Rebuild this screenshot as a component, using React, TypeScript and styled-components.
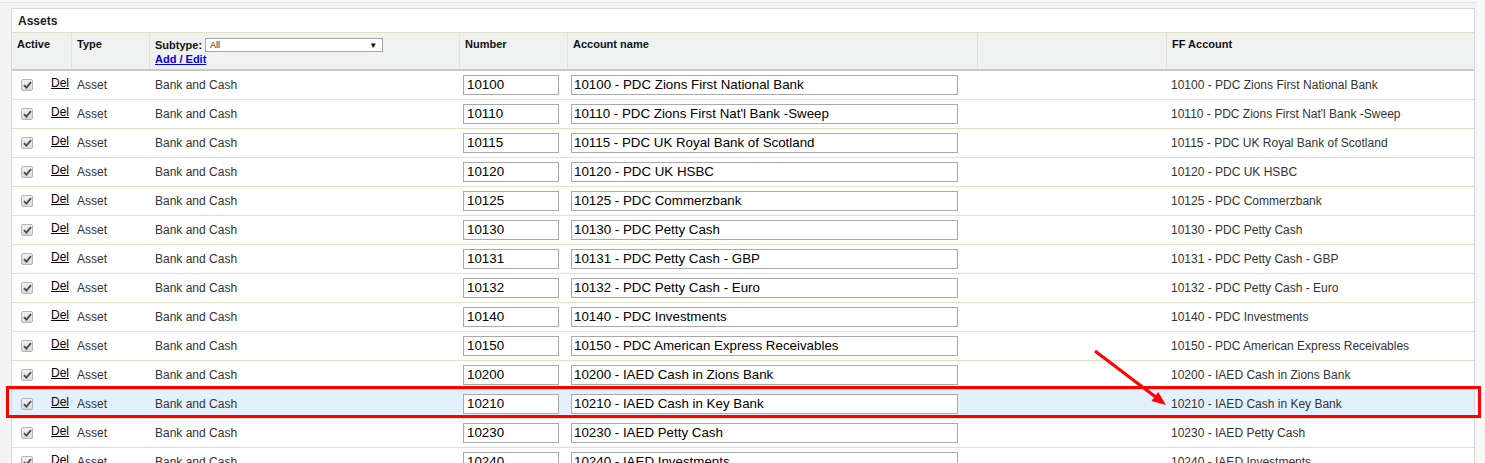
import React from "react";
import styled, { createGlobalStyle, css } from "styled-components";

const GlobalStyle = createGlobalStyle`
  html, body {
    margin: 0;
    padding: 0;
    overflow: hidden;
    background: #f8f8f8;
    font-family: "Liberation Sans", Arial, sans-serif;
  }
`;

const Page = styled.div`
  position: relative;
  width: 1477px;
  margin-top: 2px;
  border-top: 1px solid #e6e6e6;
  background: #f4f4f4;
  padding: 5px 0 0 11px;
  box-sizing: border-box;
  height: 461px;
`;

const Panel = styled.div`
  width: 1464px;
  box-sizing: border-box;
  border: 1px solid #d9d9d9;
  border-bottom: none;
  background: #fff;
`;

const Title = styled.div`
  height: 23px;
  display: flex;
  align-items: center;
  padding-left: 6px;
  font-size: 12px;
  font-weight: bold;
  color: #222;
  border-bottom: 1px solid #e2ddc0;
`;

const COLS = "60px 78px 310px 108px 410px 189px 1fr";

const HeaderRow = styled.div`
  display: grid;
  grid-template-columns: ${COLS};
  height: 36px;
  background: #f0f1f1;
  border-bottom: 2px solid #c9c9c9;
`;

const HeaderCell = styled.div<{ $last?: boolean }>`
  padding: 5px 0 0 5px;
  font-size: 11px;
  font-weight: bold;
  color: #111;
  line-height: 13px;
  border-right: ${(p) => (p.$last ? "none" : "1px solid #e1e1e1")};
`;

const SubtypeLine = styled.div`
  display: flex;
  align-items: center;
  gap: 3px;
`;

const SelectBox = styled.div`
  width: 178px;
  height: 14px;
  box-sizing: border-box;
  border: 1px solid #a6a6a6;
  background: #fff;
  display: flex;
  align-items: center;
  justify-content: space-between;
  padding: 0 5px 0 4px;
  font-size: 9px;
  font-weight: normal;
  color: #222;
`;

const Arrow = styled.span`
  font-size: 8px;
  color: #000;
`;

const HeaderLink = styled.a`
  display: block;
  margin-top: 1px;
  color: #0000ee;
  text-decoration: underline;
  font-size: 11px;
  font-weight: bold;
  cursor: pointer;
`;

const Row = styled.div<{ $highlight?: boolean }>`
  position: relative;
  display: grid;
  grid-template-columns: ${COLS};
  height: 29px;
  box-sizing: border-box;
  border-bottom: 1px solid #e4e0c6;
  background: ${(p) => (p.$highlight ? "#e2f1fd" : "#fff")};
  font-size: 12px;
  color: #333;
  ${(p) =>
    p.$highlight &&
    css`
      &::after {
        content: "";
        position: absolute;
        top: -4px;
        bottom: 0;
        left: -6px;
        right: -7px;
        border: 3px solid #ff0000;
        pointer-events: none;
        z-index: 2;
      }
    `}
`;

const Cell = styled.div<{ $pad?: number }>`
  display: flex;
  align-items: center;
  padding-left: ${(p) => (p.$pad ?? 5)}px;
  white-space: nowrap;
`;

const ActiveCell = styled.div`
  display: flex;
  align-items: center;
  padding-left: 9px;
  gap: 18px;
`;

const CheckBox = styled.span`
  width: 12px;
  height: 12px;
  box-sizing: border-box;
  border: 1px solid #b4b4b4;
  border-radius: 2px;
  background: linear-gradient(#f2f2f2, #d9d9d9);
  display: flex;
  align-items: center;
  justify-content: center;
`;

const DelLink = styled.a`
  align-self: flex-start;
  margin-top: 5px;
  font-size: 12px;
  color: #000;
  text-decoration: underline;
  cursor: pointer;
`;

const TextInput = styled.input<{ $w: number; $padX: number }>`
  width: ${(p) => p.$w}px;
  height: 20px;
  box-sizing: border-box;
  border: 1px solid #a9a9a9;
  padding: 0 ${(p) => p.$padX}px;
  margin: 0 0 1px;
  font-family: "Liberation Sans", Arial, sans-serif;
  font-size: 13.33px;
  color: #000;
  background: #fff;
  outline: none;
`;

const Annotation = styled.svg`
  position: absolute;
  left: 1088px;
  top: 341px;
  z-index: 3;
`;

const rows: [string, string][] = [
  ["10100", "PDC Zions First National Bank"],
  ["10110", "PDC Zions First Nat'l Bank -Sweep"],
  ["10115", "PDC UK Royal Bank of Scotland"],
  ["10120", "PDC UK HSBC"],
  ["10125", "PDC Commerzbank"],
  ["10130", "PDC Petty Cash"],
  ["10131", "PDC Petty Cash - GBP"],
  ["10132", "PDC Petty Cash - Euro"],
  ["10140", "PDC Investments"],
  ["10150", "PDC American Express Receivables"],
  ["10200", "IAED Cash in Zions Bank"],
  ["10210", "IAED Cash in Key Bank"],
  ["10230", "IAED Petty Cash"],
  ["10240", "IAED Investments"],
];

const Check = () => (
  <svg width="9" height="8" viewBox="0 0 9 8">
    <path d="M1 4.2 L3.4 6.6 L8 1.2" fill="none" stroke="#4a4a4a" strokeWidth="1.8" />
  </svg>
);

export default function App() {
  return (
    <>
      <GlobalStyle />
      <Page>
        <Panel>
          <Title>Assets</Title>
          <HeaderRow>
            <HeaderCell>Active</HeaderCell>
            <HeaderCell>Type</HeaderCell>
            <HeaderCell>
              <SubtypeLine>
                Subtype:
                <SelectBox>
                  <span>All</span>
                  <Arrow>▼</Arrow>
                </SelectBox>
              </SubtypeLine>
              <HeaderLink>Add / Edit</HeaderLink>
            </HeaderCell>
            <HeaderCell>Number</HeaderCell>
            <HeaderCell>Account name</HeaderCell>
            <HeaderCell />
            <HeaderCell $last>FF Account</HeaderCell>
          </HeaderRow>
          {rows.map(([num, name]) => {
            const full = `${num} - ${name}`;
            return (
              <Row key={num} $highlight={num === "10210"}>
                <ActiveCell>
                  <CheckBox>
                    <Check />
                  </CheckBox>
                  <DelLink>Del</DelLink>
                </ActiveCell>
                <Cell>Asset</Cell>
                <Cell>Bank and Cash</Cell>
                <Cell $pad={3}>
                  <TextInput $w={96} $padX={3} defaultValue={num} readOnly />
                </Cell>
                <Cell $pad={3}>
                  <TextInput $w={387} $padX={2} defaultValue={full} readOnly />
                </Cell>
                <Cell />
                <Cell $pad={4}>{full}</Cell>
              </Row>
            );
          })}
        </Panel>
        <Annotation width="84" height="70" viewBox="0 0 84 70">
          <line x1="7" y1="7" x2="67" y2="52.5" stroke="#ff0000" strokeWidth="3" />
          <polygon points="78,61 63.6,56.9 70.2,48.1" fill="#ff0000" />
        </Annotation>
      </Page>
    </>
  );
}
